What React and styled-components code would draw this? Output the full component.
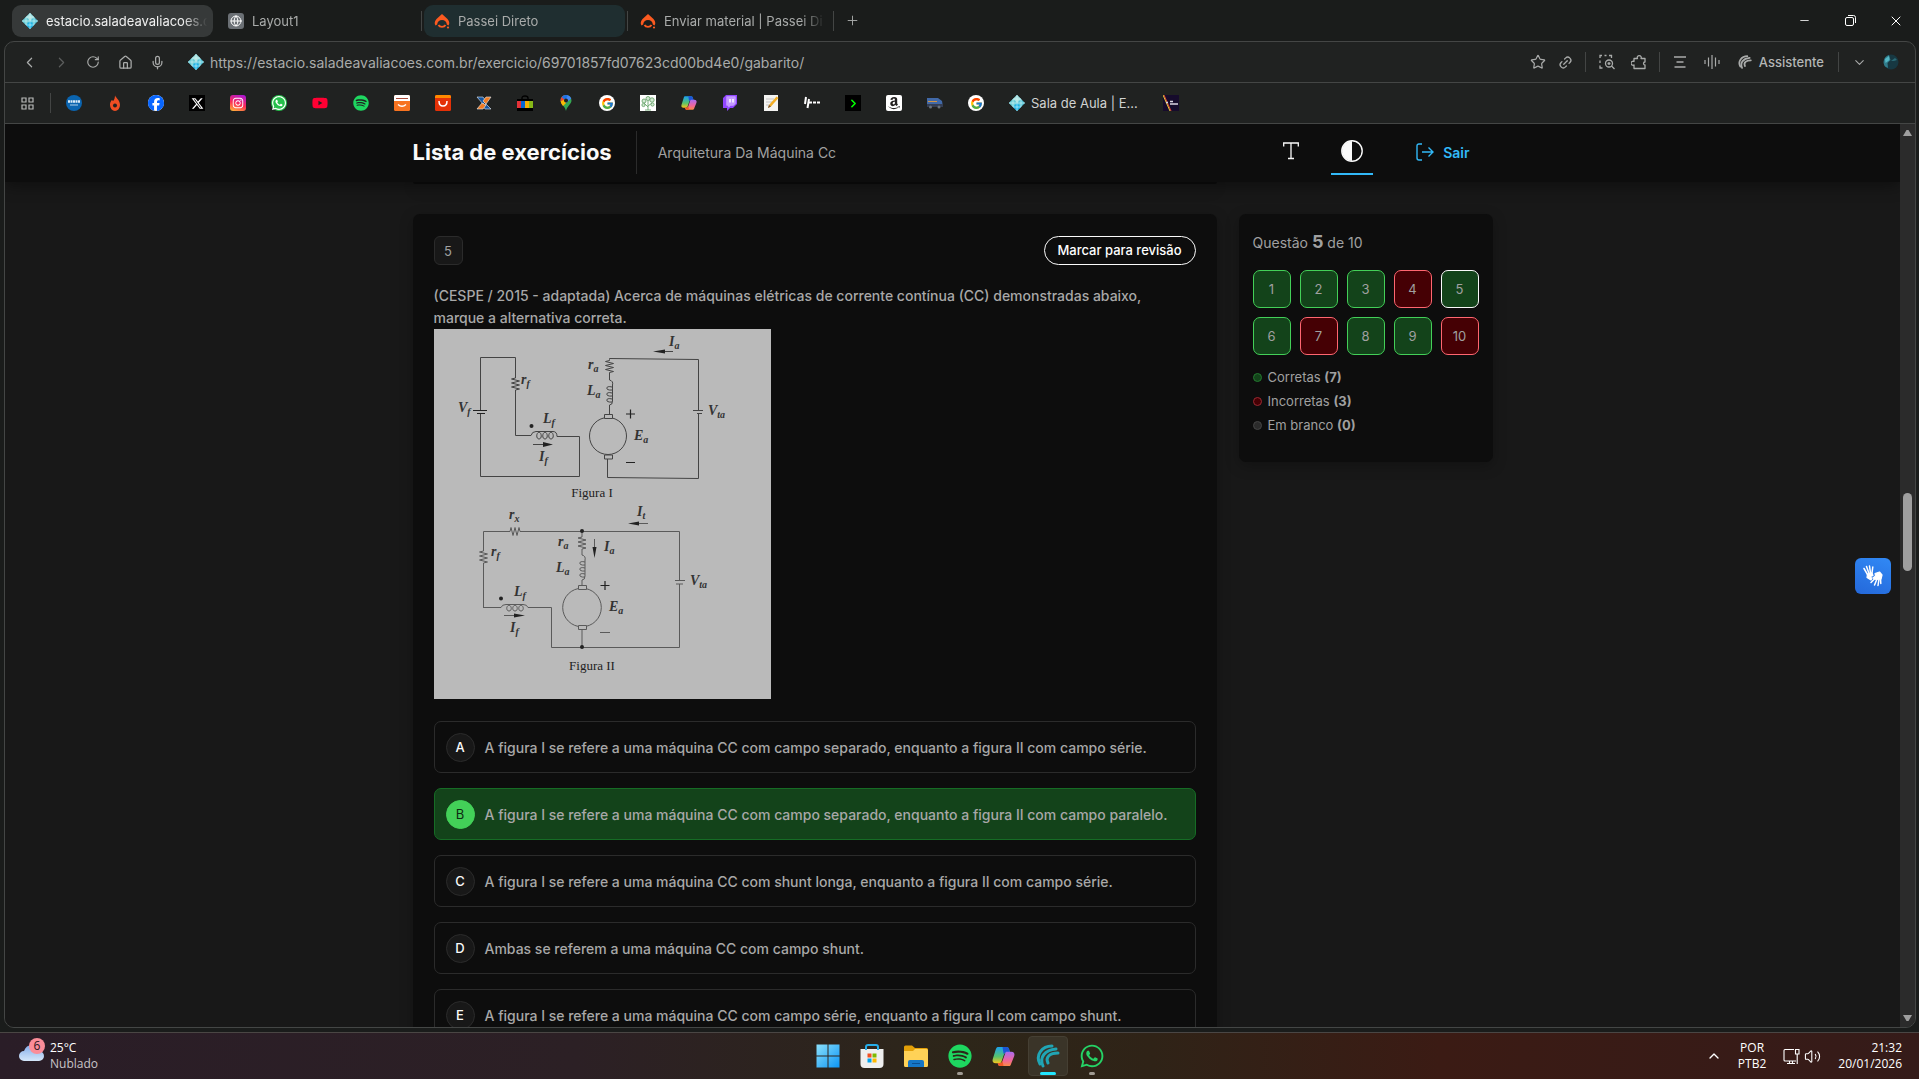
import React, { useState } from "react";
import styled, { createGlobalStyle } from "styled-components";
import {
  ChevronLeft,
  ChevronRight,
  ChevronDown,
  ChevronUp,
  RotateCw,
  House,
  Mic,
  Star,
  Link2,
  Plus,
  Minus,
  X,
  Globe,
  Volume2,
} from "lucide-react";
import {
  FaFacebook,
  FaXTwitter,
  FaInstagram,
  FaWhatsapp,
  FaYoutube,
  FaSpotify,
  FaAmazon,
} from "react-icons/fa6";
import { FcGoogle } from "react-icons/fc";

const GlobalStyle = createGlobalStyle`
  * {
    box-sizing: border-box;
  }

  body {
    margin: 0;
    background: #1b1d1c;
    font-family: Inter, "Liberation Sans", sans-serif;
    overflow: hidden;
  }

  button,
  input {
    font-family: inherit;
    margin: 0;
  }
`;

/* ---------- browser window ---------- */

const Desktop = styled.div`
  height: 100vh;
  display: flex;
  flex-direction: column;
  background: #1a1c1b;
`;

const TabStrip = styled.div`
  height: 41px;
  flex: none;
  display: flex;
  align-items: center;
  padding: 0 0 0 12px;
`;

const Tab = styled.button`
  width: 201px;
  height: 32px;
  display: flex;
  align-items: center;
  gap: 8px;
  padding: 0 4px 0 10px;
  border: 0;
  border-radius: 9px;
  background: ${({ $bg }) => $bg || "transparent"};
  color: ${({ $active }) => ($active ? "#f0f0f0" : "#a9abaa")};
  font-size: 13px;
  text-align: left;

  svg {
    flex: none;
  }
`;

const TabTitle = styled.span`
  flex: 1;
  overflow: hidden;
  white-space: nowrap;
  mask-image: linear-gradient(90deg, #000 84%, transparent 99%);
`;

const TabGap = styled.span`
  width: 5px;
  height: 20px;
  display: flex;
  justify-content: center;

  &::before {
    content: "";
    width: 1px;
    background: ${({ $line }) => ($line ? "#434544" : "transparent")};
  }
`;

const IconButton = styled.button`
  width: ${({ $width }) => $width || 32}px;
  height: 30px;
  display: flex;
  align-items: center;
  justify-content: center;
  flex: none;
  padding: 0;
  border: 0;
  background: none;
  color: ${({ $color }) => $color || "#a9abaa"};
`;

const WindowControls = styled.div`
  margin-left: auto;
  display: flex;
`;

const BrowserFrame = styled.div`
  flex: 1;
  min-height: 0;
  display: flex;
  flex-direction: column;
  margin: 0 3px 4px 4px;
  border: 1px solid #444645;
  border-radius: 10px;
  overflow: hidden;
  background: #202221;
`;

const Toolbar = styled.div`
  height: 41px;
  flex: none;
  display: flex;
  align-items: center;
  padding: 0 8px;
  border-bottom: 1px solid #444645;
`;

const AddressIcon = styled.span`
  display: flex;
  margin: 0 6px 0 15px;
`;

const Address = styled.input`
  flex: 1;
  min-width: 0;
  padding: 0;
  border: 0;
  outline: 0;
  background: none;
  color: #a9abaa;
  font-size: 14px;
`;

const Separator = styled.span`
  width: 1px;
  height: 20px;
  flex: none;
  margin: 0 ${({ $space }) => $space || 4}px;
  background: #434544;
`;

const Assistant = styled.button`
  display: flex;
  align-items: center;
  gap: 7px;
  padding: 0 10px;
  border: 0;
  background: none;
  color: #b4b6b5;
  font-size: 13px;
  font-weight: 500;
`;

const Bookmarks = styled.nav`
  height: 41px;
  flex: none;
  display: flex;
  align-items: center;
  gap: 25px;
  padding: 0 14px;
  border-bottom: 1px solid #444645;
`;

const BookmarksMenu = styled.span`
  display: flex;
  align-items: center;
  gap: 14px;
  margin-right: -11px;
`;

const Bookmark = styled.a`
  display: flex;
  align-items: center;
  gap: 6px;
  color: #d0d2d1;
  font-size: 13px;
  text-decoration: none;
`;

const Tile = styled.span`
  width: 16px;
  height: 16px;
  display: flex;
  align-items: center;
  justify-content: center;
  border-radius: ${({ $radius }) => $radius || 0}px;
  background: ${({ $bg }) => $bg};
  color: ${({ $color }) => $color || "#fff"};
`;

/* ---------- page ---------- */

const Viewport = styled.div`
  flex: 1;
  min-height: 0;
  display: flex;
`;

const Page = styled.div`
  flex: 1;
  min-width: 0;
  display: flex;
  flex-direction: column;
  position: relative;
  overflow: hidden;
  background: #181818;
`;

const PageHeader = styled.header`
  flex: none;
  position: relative;
  z-index: 1;
  background: #0d0d0d;
  box-shadow: 0 4px 14px rgba(0, 0, 0, 0.4);
`;

const HeaderInner = styled.div`
  max-width: 1080px;
  height: 58px;
  margin: 0 auto;
  padding-bottom: 2px;
  display: flex;
  align-items: center;
`;

const PageTitle = styled.h1`
  margin: 0;
  color: #fafafa;
  font-size: 22px;
  font-weight: 700;
`;

const HeaderDivider = styled.span`
  width: 1px;
  height: 43px;
  margin: 0 21px 0 24px;
  background: #2b2b2b;
`;

const Subject = styled.span`
  color: #a0a0a0;
  font-size: 14px;
`;

const HeaderTools = styled.div`
  align-self: stretch;
  display: flex;
  align-items: center;
  gap: 19px;
  margin-left: auto;
  padding: 0 23px 0 0;
`;

const ToolButton = styled.button`
  width: 42px;
  height: 46px;
  display: flex;
  align-items: center;
  justify-content: center;
  padding: 0;
  border: 0;
  border-bottom: 2px solid ${({ $active }) => ($active ? "#32b9f8" : "transparent")};
  background: none;
  color: #fafafa;
`;

const ExitLink = styled.a`
  display: flex;
  align-items: center;
  gap: 9px;
  margin-left: 24px;
  color: #32b9f8;
  font-size: 14px;
  font-weight: 600;
  text-decoration: none;
`;

const Content = styled.main`
  flex: 1;
  min-height: 0;
  width: 100%;
  max-width: 1080px;
  margin: 0 auto;
  display: grid;
  grid-template-columns: minmax(0, 1fr) 254px;
  align-items: start;
  gap: 22px;
`;

const PreviousCard = styled.div`
  height: 2px;
  margin-bottom: 30px;
  border-radius: 0 0 7px 7px;
  background: #0d0d0d;
  box-shadow: 0 4px 14px rgba(0, 0, 0, 0.25);
`;

const Card = styled.section`
  padding: 22px 21px;
  border-radius: 7px;
  background: #0d0d0d;
  box-shadow: 0 4px 14px rgba(0, 0, 0, 0.25);
`;

const CardTop = styled.div`
  display: flex;
  align-items: center;
  justify-content: space-between;
`;

const QuestionNumber = styled.span`
  width: 29px;
  height: 29px;
  display: flex;
  align-items: center;
  justify-content: center;
  border: 1px solid #2b2b2b;
  border-radius: 6px;
  background: #181818;
  color: #a0a0a0;
  font-size: 13px;
`;

const ReviewButton = styled.button`
  width: 152px;
  height: 29px;
  padding: 0 0 2px;
  border: 1px solid #fafafa;
  border-radius: 15px;
  background: none;
  color: #fff;
  font-size: 13px;
  font-weight: 500;
`;

const Statement = styled.p`
  margin: 20px 0 0;
  color: #a8a8a8;
  font-size: 14px;
  font-weight: 500;
  line-height: 22px;
`;

const Figure = styled.svg`
  display: block;
  width: 337px;
  height: 370px;
  background: #bababa;
`;

const Options = styled.div`
  display: flex;
  flex-direction: column;
  gap: 15px;
  margin-top: 22px;
`;

const Option = styled.button`
  width: 100%;
  height: 52px;
  flex: none;
  display: flex;
  align-items: center;
  gap: 10px;
  padding: 0 11px;
  border: 1px solid ${({ $correct }) => ($correct ? "#166c25" : "#2b2b2b")};
  border-radius: 7px;
  background: ${({ $correct }) => ($correct ? "#13431a" : "transparent")};
  color: #a8a8a8;
  font-size: 14px;
  font-weight: 500;
  text-align: left;
`;

const OptionLetter = styled.span`
  width: 29px;
  height: 29px;
  flex: none;
  display: flex;
  align-items: center;
  justify-content: center;
  border: 1px solid ${({ $correct }) => ($correct ? "#43d058" : "#2b2b2b")};
  border-radius: 50%;
  background: ${({ $correct }) => ($correct ? "#43d058" : "#181818")};
  color: ${({ $correct }) => ($correct ? "#0d2b12" : "#fafafa")};
  font-size: 13px;
  font-weight: ${({ $correct }) => ($correct ? 400 : 500)};
`;

const Sidebar = styled.aside`
  margin-top: 32px;
  padding: 15px 14px 25px;
  border-radius: 7px;
  background: #0d0d0d;
  box-shadow: 0 4px 14px rgba(0, 0, 0, 0.25);
  color: #a0a0a0;
`;

const Progress = styled.p`
  margin: 0 0 15px;
  font-size: 14px;
  line-height: 25px;

  strong {
    font-size: 18px;
    font-weight: 700;
  }
`;

const QuestionGrid = styled.div`
  display: grid;
  grid-template-columns: repeat(5, 1fr);
  gap: 9px;
`;

const QuestionButton = styled.button`
  height: 38px;
  padding: 0;
  border: 1px solid
    ${({ $current, $correct }) => ($current ? "#fafafa" : $correct ? "#43d058" : "#ff6670")};
  border-radius: 7px;
  background: ${({ $correct }) => ($correct ? "#13431a" : "#450004")};
  color: #a0a0a0;
  font-size: 13px;
`;

const Legend = styled.ul`
  margin: 10px 0 0;
  padding: 0;
  list-style: none;
  font-size: 13px;
  line-height: 24px;
`;

const LegendItem = styled.li`
  display: flex;
  align-items: center;
  gap: 6px;

  &::before {
    content: "";
    width: 7px;
    height: 7px;
    border: 1px solid ${({ $border }) => $border};
    border-radius: 50%;
    background: ${({ $bg }) => $bg};
  }
`;

const LibrasButton = styled.button`
  position: absolute;
  right: 9px;
  top: 434px;
  width: 36px;
  height: 36px;
  display: flex;
  align-items: center;
  justify-content: center;
  padding: 0;
  border: 0;
  border-radius: 6px;
  background: linear-gradient(200deg, #3189f5, #2468da);
  color: #fff;
`;

const Scrollbar = styled.div`
  width: 15px;
  flex: none;
  display: flex;
  flex-direction: column;
  align-items: center;
  padding: 5px 0;
  background: #2b2b2b;
`;

const ScrollSpace = styled.span`
  flex: ${({ $grow }) => $grow};
`;

const ScrollThumb = styled.span`
  width: 9px;
  height: 78px;
  border-radius: 5px;
  background: #9f9f9f;
`;

/* ---------- taskbar ---------- */

const Taskbar = styled.footer`
  height: 47px;
  flex: none;
  display: grid;
  grid-template-columns: 1fr auto 1fr;
  align-items: center;
  border-top: 1px solid #4a4644;
  background: linear-gradient(90deg, #2a1d27 0%, #2c2025 30%, #2d2619 50%, #2f2317 60%, #3b1b14 75%, #351b19 100%);
  color: #fff;
  font-family: "Open Sans", "Noto Sans", sans-serif;
  font-size: 12px;
  line-height: 16px;
`;

const Weather = styled.button`
  display: flex;
  align-items: center;
  gap: 5px;
  padding: 0 0 0 18px;
  border: 0;
  background: none;
  color: #fff;
  font: inherit;
  text-align: left;

  span {
    color: #c9c4c7;
  }
`;

const Apps = styled.div`
  display: flex;
  gap: 4px;
`;

const AppButton = styled.button`
  position: relative;
  width: 40px;
  height: 40px;
  display: flex;
  align-items: center;
  justify-content: center;
  padding: 0;
  border: 1px solid ${({ $active }) => ($active ? "#453f33" : "transparent")};
  border-radius: 4px;
  background: ${({ $active }) => ($active ? "#3a3428" : "none")};

  &::after {
    content: "";
    position: absolute;
    bottom: 0;
    width: ${({ $active }) => ($active ? 16 : 6)}px;
    height: 3px;
    border-radius: 2px;
    background: ${({ $active, $running }) =>
      $active ? "#22e6ff" : $running ? "#a19b93" : "transparent"};
  }
`;

const Tray = styled.div`
  display: flex;
  align-items: center;
  justify-content: flex-end;
  padding-right: 17px;
  text-align: center;

  svg {
    margin-right: 4px;
  }
`;

const Language = styled.span`
  margin: 0 17px 0 12px;
`;

const Clock = styled.time`
  margin-left: 13px;
  text-align: right;
`;

/* ---------- icons ---------- */

const DiamondIcon = () => (
  <svg width="16" height="16" viewBox="0 0 16 16">
    <path d="M8 0l8 8-8 8-8-8z" fill="#55c3d8" />
    <path d="M8 0l4 4-4 4-4-4z" fill="#a5e0df" />
    <path d="M0 8l4-4 4 4-4 4z" fill="#6accd5" />
    <path d="M8 8l4 4-4 4-4-4z" fill="#1fb4e8" />
    <path d="M4 4h8v8H4zM8 0v16M0 8h16" fill="none" stroke="#d7f6f6" strokeWidth=".6" />
  </svg>
);

const PasseiIcon = () => (
  <svg width="16" height="16" viewBox="0 0 16 16">
    <path d="M8 1L13.500 6Q16.500 9.500 14.500 12.500L12.800 11.500A4.800 4.500 0 0 0 3.200 11.500L1.500 12.500Q-.5 9.500 2.500 6z" fill="#fb5a20" />
    <path d="M4.500 12a3.800 3 0 0 0 7 0" fill="none" stroke="#fb5a20" strokeWidth="1.800" />
    <circle cx="14" cy="14.500" r="1.100" fill="#fb5a20" />
  </svg>
);

const CopilotIcon = ({ size }) => (
  <svg width={size} height={size} viewBox="0 0 24 24">
    <defs>
      <linearGradient id="copilotLeft" x1="0" y1="0" x2="0" y2="1">
        <stop offset="0" stopColor="#1ba1ef" />
        <stop offset=".6" stopColor="#58c46c" />
        <stop offset="1" stopColor="#f5c51d" />
      </linearGradient>
      <linearGradient id="copilotRight" x1="0" y1="0" x2="0" y2="1">
        <stop offset="0" stopColor="#a86bf2" />
        <stop offset=".6" stopColor="#f0669b" />
        <stop offset="1" stopColor="#fb8a45" />
      </linearGradient>
    </defs>
    <path d="M6 2h9c2 0 2.500 1 3 3l.8 3h-4c-1.500 0-2 1-2.500 2.500L10 17c-.5 1.500-1 2-2.500 2H4c-3 0-4-2-3.200-4.500L4 4.500C4.500 3 5 2 6 2z" fill="url(#copilotLeft)" />
    <path d="M11 2h4c2 0 2.500 1 3 3l.8 3h-4c-1.500 0-2 0-2.600 2z" fill="#1c56d5" />
    <path d="M18 22H9c-2 0-2.500-1-3-3h2.500c1.500 0 2-1 2.500-2.500L14 8c.5-1 1-1 2-1h4c3 0 4 2 3.200 4.500L20 19.500c-.5 1.500-1 2.500-2 2.500z" fill="url(#copilotRight)" />
    <path d="M6 19h2.500c1.500 0 2-1 2.500-2.500l1 5.500H9c-2 0-2.500-1-3-3z" fill="#f05a28" />
  </svg>
);

const SwirlIcon = ({ size, color }) => (
  <svg width={size} height={size} viewBox="0 0 24 24" fill="none" stroke={color} strokeLinecap="round">
    <path d="M4 20C-1 11 6 2 16 2" strokeWidth="3" />
    <path d="M7 22C3 13 9 6 20 5" strokeWidth="3" />
    <path d="M12 19C9 13 14 9 22 9" strokeWidth="3" />
  </svg>
);

const FireIcon = () => (
  <svg width="16" height="16" viewBox="0 0 16 16">
    <path d="M8 0c0 2.500 5 4.500 5 10a5 6 0 0 1-10 0c0-2 .6-3.500 1.800-5L6.200 6C7.500 4.500 8 2.500 8 0z" fill="#f04e23" />
    <circle cx="8" cy="10.500" r="2" fill="#202221" />
  </svg>
);

const BagIcon = ({ top, color, brand }) => (
  <svg width="16" height="16" viewBox="0 0 16 16">
    <rect width="16" height="16" rx="1.500" fill={color} />
    <path d={brand ? "M0 1.500Q0 0 1.500 0h13Q16 0 16 1.500v4.500H0z" : "M0 1.500Q0 0 1.500 0h13Q16 0 16 1.500V3H0z"} fill={top} />
    {brand && <path d="M2 3.500h12" stroke="#a84a38" strokeWidth="1.200" />}
    <path d={brand ? "M4 9.500q4 3.500 8 0" : "M4 6q0 5 4 5t4-5"} fill="none" stroke="#fff" strokeWidth="1.500" />
  </svg>
);

const KnotIcon = () => (
  <svg width="16" height="16" viewBox="0 0 16 16" stroke="#e8eef5" strokeWidth=".6">
    <path d="M1 2h6l3 4-3 3zM10 9l5 5H9L7 11z" fill="#15559f" />
    <path d="M15 2h-5L7 6l3 3zM6 8l-5 6h6l3-4z" fill="#f07b22" />
  </svg>
);

const StripedBagIcon = () => (
  <svg width="16" height="16" viewBox="0 0 16 16">
    <path d="M5 5V3q0-2 3-2t3 2v2" fill="none" stroke="#000" strokeWidth="1.400" />
    <path d="M0 4h16v12H0z" fill="#000" />
    <path d="M0 6h4v7H0z" fill="#e53238" />
    <path d="M4 6h4v7H4z" fill="#0864d2" />
    <path d="M8 6h4v7H8z" fill="#f5af02" />
    <path d="M12 6h4v7h-4z" fill="#86b817" />
  </svg>
);

const PinIcon = () => (
  <svg width="16" height="16" viewBox="0 0 16 16">
    <path d="M8 0a5.500 5.500 0 0 1 5.500 5.500C13.500 9 9 11 8 16 7 11 2.500 9 2.500 5.500A5.500 5.500 0 0 1 8 0z" fill="#34a853" />
    <path d="M8 0a5.500 5.500 0 0 1 5.200 3.700L8 8z" fill="#4285f4" />
    <path d="M8 0v5L4 9C2 6.500 2.200 4 3.700 2.100A5.500 5.500 0 0 1 8 0z" fill="#ea4335" />
    <path d="M2.700 6.500L7 4l1 4-3 3C4 9.500 3 8.500 2.700 6.500z" fill="#fbbc04" />
    <path d="M8 0a5.500 5.500 0 0 0-4.300 2L7 5l3-4.500z" fill="#1a73e8" />
    <circle cx="8" cy="5.500" r="2" fill="#202221" />
  </svg>
);

const TreeIcon = () => (
  <svg width="16" height="16" viewBox="0 0 16 16">
    <rect width="16" height="16" fill="#fff" />
    <g fill="#d3e8d3" stroke="#6aa66d" strokeWidth=".9">
      <circle cx="8" cy="3.500" r="2" />
      <circle cx="4" cy="6" r="2" />
      <circle cx="12" cy="5" r="2.200" />
      <circle cx="3.500" cy="10" r="1.600" />
      <circle cx="12.500" cy="9.500" r="1.600" />
      <path d="M8 15V6M8 12L4 8M8 11l4-3M5 15h6" />
    </g>
  </svg>
);

const TwitchIcon = () => (
  <svg width="16" height="16" viewBox="0 0 16 16">
    <path d="M4 0h11v9l-4 4H8l-3 3v-3H1V3z" fill="#9146ff" />
    <path d="M4.500 1.500h9v7l-2 2H8.500l-2 2v-2h-2z" fill="#fff" />
    <path d="M4.500 1.500h9v7l-2 2H8.500l-2 2v-2h-2z" fill="#9146ff" opacity=".55" />
    <path d="M8 4v3.500M11 4v3.500" stroke="#fff" strokeWidth="1.500" />
  </svg>
);

const NoteIcon = () => (
  <svg width="16" height="16" viewBox="0 0 16 16">
    <path d="M1 0h14v16H1z" fill="#f4f4f2" />
    <path d="M3 4h8M3 7h6M3 10h4" stroke="#c4c4c4" />
    <path d="M5 13l1-3L13.500 1.500l2 1.500L8 11.500z" fill="#f3ae25" />
    <path d="M5 13l1-3 2 1.500z" fill="#70503a" />
  </svg>
);

const DashIcon = () => (
  <svg width="16" height="16" viewBox="0 0 16 16" fill="none" stroke="#fff">
    <path d="M2 2L1 9M5 4L3.500 13" strokeWidth="2" />
    <path d="M5 7.500h11" strokeWidth="2" strokeDasharray="3 1" />
  </svg>
);

const TruckIcon = () => (
  <svg width="16" height="16" viewBox="0 0 16 16">
    <path d="M0 3h11l4 3 1 6H0z" fill="#4169a8" />
    <path d="M1 6.500h9" stroke="#d39543" />
    <path d="M0 9h16v3H0z" fill="#343e54" />
    <circle cx="3.500" cy="12" r="1.500" fill="#69727c" />
    <circle cx="12" cy="12" r="1.500" fill="#69727c" />
  </svg>
);

const PrismIcon = () => (
  <svg width="16" height="16" viewBox="0 0 16 16">
    <rect width="16" height="16" fill="#160b2c" />
    <path d="M1 0l7 16" stroke="#e33e36" />
    <path d="M0 0l7 16" stroke="#e7cb3c" />
    <path d="M3 7.500h2M7 6.500h3M7 9h8" stroke="#ddd6e4" strokeWidth="1.300" />
  </svg>
);

const GridIcon = () => (
  <svg width="13" height="13" viewBox="0 0 13 13" fill="none" stroke="#b9bbba" strokeWidth="1.200">
    <path d="M1 1h4v4H1zM8 1h4v4H8zM1 8h4v4H1zM8 8h4v4H8z" />
  </svg>
);

const SearchAreaIcon = () => (
  <svg width="16" height="16" viewBox="0 0 16 16" fill="none" stroke="#a9abaa" strokeWidth="1.300">
    <path d="M1 4V1.500h2M5.500 1.500h2M10 1.500h2.500V4M1 6.500V9M1 11.500V14h2.500" />
    <circle cx="10" cy="9.500" r="3.500" />
    <path d="M12.500 12l3 3M8.500 9.500h3M10 8v3" />
  </svg>
);

const PuzzleIcon = () => (
  <svg width="16" height="16" viewBox="0 0 16 16" fill="none" stroke="#a9abaa" strokeWidth="1.300" strokeLinejoin="round">
    <path d="M3 4.500h3.500a2 2 0 1 1 3.500 0h4V8a1.500 1.500 0 1 0 0 3v3.500H3V11a2 2 0 1 1 0-3.500z" />
  </svg>
);

const LinesIcon = () => (
  <svg width="14" height="14" viewBox="0 0 14 14" stroke="#a9abaa" strokeWidth="1.400">
    <path d="M1 2h12M3.500 7h7M1.500 12h11" />
  </svg>
);

const WaveIcon = () => (
  <svg width="16" height="16" viewBox="0 0 16 16" stroke="#a9abaa" strokeWidth="1.200">
    <path d="M1 6v4M4.500 3.500v9M8 1v14M11.500 3.500v9M15 6v4" />
  </svg>
);

const RestoreIcon = () => (
  <svg width="11" height="11" viewBox="0 0 11 11" fill="none" stroke="#fff">
    <rect x=".5" y="2.500" width="8" height="8" rx="1.500" />
    <path d="M3 .5h5.500a2 2 0 0 1 2 2V8" />
  </svg>
);

const AvatarIcon = () => (
  <svg width="16" height="16" viewBox="0 0 16 16">
    <circle cx="8" cy="8" r="7.500" fill="#173842" />
    <path d="M6 1A7.500 7.500 0 0 0 2 12.500L5 14 4.500 9l3-3z" fill="#317c8b" />
    <path d="M2 5l4-3 .5 4-4 3z" fill="#55b8c5" />
    <path d="M8 7l4-3 2 2-3 1z" fill="#2b6a76" />
  </svg>
);

const TextSizeIcon = () => (
  <svg width="16" height="18" viewBox="0 0 16 18" fill="none" stroke="#fafafa" strokeWidth="1.300">
    <path d="M.7 4.500V1h14.600v3.500M8 1v15.500M5 16.500h6" />
  </svg>
);

const ContrastIcon = () => (
  <svg width="22" height="22" viewBox="0 0 22 22">
    <circle cx="11" cy="11" r="10.200" fill="none" stroke="#fafafa" strokeWidth="1.400" />
    <path d="M11 1a10 10 0 0 0 0 20z" fill="#fafafa" />
  </svg>
);

const ExitIcon = () => (
  <svg width="18" height="18" viewBox="0 0 18 18" fill="none" stroke="#32b9f8" strokeWidth="1.400">
    <path d="M6 1H3Q1 1 1 3v12q0 2 2 2h3M6 9h11M12.500 4.500L17 9l-4.500 4.500" />
  </svg>
);

const LibrasIcon = () => (
  <svg width="20" height="22" viewBox="0 0 20 22" fill="none" stroke="#fff" strokeLinecap="round" strokeLinejoin="round">
    <path d="M4.500 9.500L1 3.500M6 8.500L3.500 1.500M7.500 8L6.500 1M9 8L9.800 2" strokeWidth="1.500" />
    <path d="M4.500 9L9 8l1 2.500-3.500 1.500L9 13l-1 2-4-2.500z" fill="#fff" strokeWidth="1.200" />
    <path d="M12 8.500L16.500 7l2.500 3-1 4-5 .5-3-1.500 2.500-2z" fill="#fff" strokeWidth="1.200" />
    <path d="M12.500 13L8 17.500M14 14L11.500 20M16 14l-1 6.500M17.500 13.500l.3 5" strokeWidth="1.500" />
  </svg>
);

const ScrollArrow = ({ down }) => (
  <svg width="9" height="8" viewBox="0 0 9 8">
    <path d={down ? "M0 1h9L5.500 7h-2z" : "M0 7h9L5.500 1h-2z"} fill="#9f9f9f" />
  </svg>
);

const CloudIcon = () => (
  <svg width="27" height="36" viewBox="0 0 27 36">
    <defs>
      <linearGradient id="cloud" x1="0" y1="0" x2="0" y2="1">
        <stop offset="0" stopColor="#83ace9" />
        <stop offset="1" stopColor="#d5e7fa" />
      </linearGradient>
    </defs>
    <path d="M6 23a5 5 0 0 1 0-10Q8 7 14 7t7 6a5 5 0 0 1 0 10z" fill="url(#cloud)" />
    <circle cx="19" cy="8" r="8" fill="#fb8d99" />
    <text x="19" y="12" textAnchor="middle" fontSize="12" fill="#2a1520">6</text>
  </svg>
);

const WindowsIcon = () => (
  <svg width="24" height="24" viewBox="0 0 24 24">
    <defs>
      <linearGradient id="windows" x1="0" y1="0" x2="1" y2="1">
        <stop offset="0" stopColor="#8be0fb" />
        <stop offset="1" stopColor="#0c95f5" />
      </linearGradient>
    </defs>
    <path d="M.5.500h11v11H.5zM12.500.500h11v11h-11zM.5 12.500h11v11H.5zM12.500 12.500h11v11h-11z" fill="url(#windows)" />
  </svg>
);

const StoreIcon = () => (
  <svg width="24" height="24" viewBox="0 0 24 24">
    <path d="M6 8V3q0-2 2-2h8q2 0 2 2v5" fill="none" stroke="#27ade8" strokeWidth="2" />
    <path d="M.5 5h23v15q0 4-4 4h-15q-4 0-4-4z" fill="#efefef" />
    <path d="M6 6V3M18 6V3" stroke="#27ade8" strokeWidth="2" />
    <path d="M7.500 9.500h4v4h-4z" fill="#f25022" />
    <path d="M12.500 9.500h4v4h-4z" fill="#7fba00" />
    <path d="M7.500 14.500h4v4h-4z" fill="#00a4ef" />
    <path d="M12.500 14.500h4v4h-4z" fill="#ffb900" />
  </svg>
);

const FolderIcon = () => (
  <svg width="24" height="24" viewBox="0 0 24 24">
    <path d="M0 3q0-1.500 1.500-1.500H8L11 4h11.500Q24 4 24 5.500V12H0z" fill="#e3a008" />
    <path d="M0 7h9l2-2h11.500Q24 5 24 6.500v15q0 1.500-1.500 1.500h-21Q0 23 0 21.500z" fill="#ffd257" />
    <path d="M4 23v-5q0-2 2-2h12q2 0 2 2v5z" fill="#1576c6" />
    <path d="M8 19.500h8" stroke="#0b4f91" />
  </svg>
);

const NetworkIcon = () => (
  <svg width="17" height="17" viewBox="0 0 17 17" fill="none" stroke="#fff" strokeWidth="1.100">
    <path d="M11 1.500H2q-1 0-1 1V12q0 1 1 1h11M4 15.500h8M6.500 13v2.500M9.500 13v2.500" />
    <path d="M12.500 1.500h3.500V6h-3.500zM14.200 6v10" />
  </svg>
);

/* ---------- circuit figure ---------- */

const Symbol = ({ x, y, name, sub }) => (
  <text x={x} y={y} fontSize="14" fontStyle="italic" fontWeight="700" fill="#333">
    {name}
    <tspan dy="3" fontSize="10">
      {sub}
    </tspan>
  </text>
);

const ZIGZAG_V = "l0 1l-4 1l8 2l-8 2l8 2l-8 2l8 2l-4 1";
const ZIGZAG_H = "l1 0l1 -4l2 8l2 -8l2 8l2 -8l1 4l1 0";

const CircuitFigure = () => (
  <Figure viewBox="0 0 337 370" role="img" aria-label="Figura I e Figura II">
    <g fill="none" stroke="#444" strokeWidth="1">
      <path d={`M46.500 81V28.500H81.500V48${ZIGZAG_V}V106.500H97M123 107.500H145.500V147.500H46.500V85`} />
      <path d="M39 81.500H53M43 84.500H51" stroke="#222" />
      <path d="M97 106.500q1-4 5-4h17q4 0 4 5" />
      <path d="M105 103c-3 1-3 7 0 7s3-6 0-7M111 103c-3 1-3 7 0 7s3-6 0-7M117 103c-3 1-3 7 0 7s3-6 0-7" />
      <path d={`M264.500 81V30.500L175.500 29.500v1${ZIGZAG_V}V51q4 1 3 5v16q0 4-3 4v9.500M264.500 85V149.500L173.500 148.500V130`} />
      <path d="M259 81.500h10M263 84.500h5" />
      <path d="M178 58c-7-2-7 4 0 3M178 64c-7-2-7 4 0 3M178 70c-7-2-7 4 0 3" />
      <circle cx="174" cy="107" r="18.500" />
      <path d="M170.500 85.500h8v4h-8zM170.500 126h8v4h-8z" fill="#bababa" />
      <path d="M192 85h9M196.500 80.500v9M192 133.500h9" stroke="#222" strokeWidth="1.200" />
      <path d="M99 115.500h16M225 22.500h14" />
    </g>
    <g fill="none" stroke="#5a5a5a" strokeWidth="1">
      <path d={`M49.500 279V234M49.500 222V202.500H75${ZIGZAG_H}H245.500V251M245.500 255V318.500H117.500V278.500H94M67 278.500H49.500`} />
      <path d={`M49.500 221${ZIGZAG_V}`} />
      <path d="M241 251.500h10M242 255h7" />
      <path d="M67 278.500q1-3 5-3h17q4 0 5 3" />
      <path d="M75 276c-3 1-3 6 0 6s3-5 0-6M81 276c-3 1-3 6 0 6s3-5 0-6M87 276c-3 1-3 6 0 6s3-5 0-6" />
      <path d={`M148 202V207${ZIGZAG_V}V226q4 1 3 5v16q0 4-3 4v5M148 300v18`} />
      <path d="M151 233c-7-2-7 4 0 3M151 239c-7-2-7 4 0 3M151 245c-7-2-7 4 0 3" />
      <circle cx="148" cy="278.500" r="19.300" />
      <path d="M144.500 256.500h8v4h-8zM144.500 296.500h8v4h-8z" fill="#bababa" />
      <path d="M166.500 256.500h9M171 252v9" stroke="#222" strokeWidth="1.200" />
      <path d="M166 303.500h10M160.500 210v10M200 194.500h14M70 286.500h14" />
    </g>
    <g fill="#222">
      <circle cx="97.500" cy="97" r="2" />
      <circle cx="67" cy="269.500" r="2" />
      <circle cx="148" cy="202" r="2" />
      <circle cx="148" cy="318" r="2" />
      <path d="M119 115.500l-10-2.500v5zM219 22.500l12-2v4zM91 286.500l-11-2v4zM194 194.500l11-2v4zM160.500 229l-2-11h4z" />
    </g>
    <g fontFamily='"Liberation Serif", serif'>
      <Symbol x="24" y="83" name="V" sub="f" />
      <Symbol x="87" y="55" name="r" sub="f" />
      <Symbol x="109" y="94" name="L" sub="f" />
      <Symbol x="105" y="132" name="I" sub="f" />
      <Symbol x="235" y="17" name="I" sub="a" />
      <Symbol x="154" y="40" name="r" sub="a" />
      <Symbol x="153" y="66" name="L" sub="a" />
      <Symbol x="200" y="111" name="E" sub="a" />
      <Symbol x="274" y="86" name="V" sub="ta" />
      <Symbol x="75" y="190" name="r" sub="x" />
      <Symbol x="57" y="227" name="r" sub="f" />
      <Symbol x="80" y="267" name="L" sub="f" />
      <Symbol x="76" y="303" name="I" sub="f" />
      <Symbol x="203" y="187" name="I" sub="t" />
      <Symbol x="124" y="217" name="r" sub="a" />
      <Symbol x="170" y="222" name="I" sub="a" />
      <Symbol x="122" y="243" name="L" sub="a" />
      <Symbol x="175" y="282" name="E" sub="a" />
      <Symbol x="256" y="256" name="V" sub="ta" />
      <text x="158" y="168" fontSize="13" textAnchor="middle" fill="#222">Figura I</text>
      <text x="158" y="341" fontSize="13" textAnchor="middle" fill="#222">Figura II</text>
    </g>
  </Figure>
);

/* ---------- data ---------- */

const bookmarks = [
  { name: "Senai", icon: <Tile $bg="#0b65b0" $radius={8}><svg width="12" height="8" viewBox="0 0 12 8" stroke="#dcecf8"><path d="M0 2.500h12" strokeWidth="2.500" strokeDasharray="2 .5" /><path d="M2 6h8" strokeWidth=".8" /></svg></Tile> },
  { name: "Hotmart", icon: <FireIcon /> },
  { name: "Facebook", icon: <Tile $bg="#fff" $color="#0866ff" $radius={8}><FaFacebook size={16} /></Tile> },
  { name: "X", icon: <Tile $bg="#000"><FaXTwitter size={13} /></Tile> },
  { name: "Instagram", icon: <Tile $bg="linear-gradient(20deg, #ffc037, #fb2c55 45%, #a414e6)" $radius={3}><FaInstagram size={12} /></Tile> },
  { name: "WhatsApp", icon: <Tile $bg="#25c04b" $radius={8}><FaWhatsapp size={16} /></Tile> },
  { name: "YouTube", icon: <FaYoutube size={16} color="#f03" /> },
  { name: "Spotify", icon: <FaSpotify size={16} color="#1ed760" /> },
  { name: "Shopping", icon: <BagIcon top="#fff" color="#f77320" brand /> },
  { name: "AliExpress", icon: <BagIcon top="#ff8a00" color="#e43107" /> },
  { name: "Excel", icon: <KnotIcon /> },
  { name: "Loja", icon: <StripedBagIcon /> },
  { name: "Maps", icon: <PinIcon /> },
  { name: "Google", icon: <Tile $bg="#fff" $radius={8}><FcGoogle size={13} /></Tile> },
  { name: "Jardim", icon: <TreeIcon /> },
  { name: "Copilot", icon: <CopilotIcon size={16} /> },
  { name: "Twitch", icon: <TwitchIcon /> },
  { name: "Notas", icon: <NoteIcon /> },
  { name: "Atalho", icon: <DashIcon /> },
  { name: "Terminal", icon: <Tile $bg="#000"><ChevronRight size={13} color="#0f0" strokeWidth={3} /></Tile> },
  { name: "Amazon", icon: <Tile $bg="#fff" $color="#221f1f" $radius={2}><FaAmazon size={14} /></Tile> },
  { name: "Frete", icon: <TruckIcon /> },
  { name: "Pesquisa", icon: <Tile $bg="#fff" $radius={8}><FcGoogle size={13} /></Tile> },
];

const options = [
  { letter: "A", text: "A figura I se refere a uma máquina CC com campo separado, enquanto a figura II com campo série." },
  { letter: "B", text: "A figura I se refere a uma máquina CC com campo separado, enquanto a figura II com campo paralelo.", correct: true },
  { letter: "C", text: "A figura I se refere a uma máquina CC com shunt longa, enquanto a figura II com campo série." },
  { letter: "D", text: "Ambas se referem a uma máquina CC com campo shunt." },
  { letter: "E", text: "A figura I se refere a uma máquina CC com campo série, enquanto a figura II com campo shunt." },
];

const wrongQuestions = [4, 7, 10];

function BrowserTabs() {
  return (
    <TabStrip>
      <Tab $active $bg="#363939">
        <DiamondIcon />
        <TabTitle>estacio.saladeavaliacoes.c</TabTitle>
      </Tab>
      <TabGap />
      <Tab>
        <Tile $bg="#6b7075" $radius={3}><Globe size={12} /></Tile>
        <TabTitle>Layout1</TabTitle>
      </Tab>
      <TabGap $line />
      <Tab $bg="#1f2e30">
        <PasseiIcon />
        <TabTitle>Passei Direto</TabTitle>
      </Tab>
      <TabGap $line />
      <Tab>
        <PasseiIcon />
        <TabTitle>Enviar material | Passei Di</TabTitle>
      </Tab>
      <TabGap $line />
      <IconButton aria-label="Nova aba"><Plus size={15} strokeWidth={1.5} /></IconButton>
      <WindowControls>
        <IconButton $width={46} $color="#fff" aria-label="Minimizar"><Minus size={13} strokeWidth={1.5} /></IconButton>
        <IconButton $width={46} aria-label="Restaurar"><RestoreIcon /></IconButton>
        <IconButton $width={46} $color="#fff" aria-label="Fechar"><X size={16} strokeWidth={1.5} /></IconButton>
      </WindowControls>
    </TabStrip>
  );
}

function AddressBar() {
  const [url, setUrl] = useState(
    "https://estacio.saladeavaliacoes.com.br/exercicio/69701857fd07623cd00bd4e0/gabarito/"
  );

  return (
    <Toolbar>
      <IconButton aria-label="Voltar"><ChevronLeft size={17} strokeWidth={1.7} /></IconButton>
      <IconButton $color="#5b5d5c" aria-label="Avançar"><ChevronRight size={17} strokeWidth={1.7} /></IconButton>
      <IconButton aria-label="Recarregar"><RotateCw size={14} strokeWidth={2} /></IconButton>
      <IconButton aria-label="Início"><House size={15} strokeWidth={2} /></IconButton>
      <IconButton aria-label="Microfone"><Mic size={15} strokeWidth={2} /></IconButton>
      <AddressIcon><DiamondIcon /></AddressIcon>
      <Address aria-label="Endereço" value={url} onChange={(e) => setUrl(e.target.value)} />
      <IconButton $width={28} aria-label="Favoritar"><Star size={16} strokeWidth={1.8} /></IconButton>
      <IconButton $width={28} aria-label="Copiar link"><Link2 size={15} strokeWidth={2} transform="rotate(-45)" /></IconButton>
      <Separator $space={5} />
      <IconButton aria-label="Pesquisar área"><SearchAreaIcon /></IconButton>
      <IconButton aria-label="Extensões"><PuzzleIcon /></IconButton>
      <Separator />
      <IconButton aria-label="Resumo"><LinesIcon /></IconButton>
      <IconButton aria-label="Áudio"><WaveIcon /></IconButton>
      <Assistant>
        <SwirlIcon size={14} color="#a9abaa" />
        Assistente
      </Assistant>
      <Separator />
      <IconButton aria-label="Mais"><ChevronDown size={15} strokeWidth={1.7} /></IconButton>
      <IconButton aria-label="Perfil"><AvatarIcon /></IconButton>
    </Toolbar>
  );
}

function BookmarksBar() {
  return (
    <Bookmarks>
      <BookmarksMenu>
        <IconButton $width={16} aria-label="Favoritos"><GridIcon /></IconButton>
        <Separator $space={1} />
      </BookmarksMenu>
      {bookmarks.map((item) => (
        <Bookmark key={item.name} href="#" aria-label={item.name}>{item.icon}</Bookmark>
      ))}
      <Bookmark href="#">
        <DiamondIcon />
        Sala de Aula | E…
      </Bookmark>
      <Bookmark href="#" aria-label="Prisma"><PrismIcon /></Bookmark>
    </Bookmarks>
  );
}

function QuestionCard() {
  return (
    <Card>
      <CardTop>
        <QuestionNumber>5</QuestionNumber>
        <ReviewButton>Marcar para revisão</ReviewButton>
      </CardTop>
      <Statement>
        (CESPE / 2015 - adaptada) Acerca de máquinas elétricas de corrente contínua (CC) demonstradas
        abaixo, marque a alternativa correta.
      </Statement>
      <CircuitFigure />
      <Options>
        {options.map(({ letter, text, correct }) => (
          <Option key={letter} $correct={correct}>
            <OptionLetter $correct={correct}>{letter}</OptionLetter>
            {text}
          </Option>
        ))}
      </Options>
    </Card>
  );
}

function QuestionNav() {
  return (
    <Sidebar>
      <Progress>
        Questão <strong>5</strong> de 10
      </Progress>
      <QuestionGrid>
        {Array.from({ length: 10 }, (_, i) => i + 1).map((n) => (
          <QuestionButton key={n} $current={n === 5} $correct={!wrongQuestions.includes(n)}>
            {n}
          </QuestionButton>
        ))}
      </QuestionGrid>
      <Legend>
        <LegendItem $bg="#13431a" $border="#23792f"><span>Corretas <b>(7)</b></span></LegendItem>
        <LegendItem $bg="#450004" $border="#9b2932"><span>Incorretas <b>(3)</b></span></LegendItem>
        <LegendItem $bg="#2b2b2b" $border="#444"><span>Em branco <b>(0)</b></span></LegendItem>
      </Legend>
    </Sidebar>
  );
}

function WindowsTaskbar() {
  return (
    <Taskbar>
      <Weather>
        <CloudIcon />
        <div>
          25°C
          <br />
          <span>Nublado</span>
        </div>
      </Weather>
      <Apps>
        <AppButton aria-label="Iniciar"><WindowsIcon /></AppButton>
        <AppButton aria-label="Loja"><StoreIcon /></AppButton>
        <AppButton aria-label="Arquivos"><FolderIcon /></AppButton>
        <AppButton $running aria-label="Spotify"><FaSpotify size={24} color="#1ed760" /></AppButton>
        <AppButton aria-label="Copilot"><CopilotIcon size={23} /></AppButton>
        <AppButton $active aria-label="Navegador"><SwirlIcon size={24} color="#20a5b5" /></AppButton>
        <AppButton $running aria-label="WhatsApp"><FaWhatsapp size={26} color="#25d366" /></AppButton>
      </Apps>
      <Tray>
        <ChevronUp size={16} />
        <Language>
          POR
          <br />
          PTB2
        </Language>
        <NetworkIcon />
        <Volume2 size={17} strokeWidth={1.5} />
        <Clock>
          21:32
          <br />
          20/01/2026
        </Clock>
      </Tray>
    </Taskbar>
  );
}

function App() {
  return (
    <Desktop>
      <GlobalStyle />
      <BrowserTabs />
      <BrowserFrame>
        <AddressBar />
        <BookmarksBar />
        <Viewport>
          <Page>
            <PageHeader>
              <HeaderInner>
                <PageTitle>Lista de exercícios</PageTitle>
                <HeaderDivider />
                <Subject>Arquitetura Da Máquina Cc</Subject>
                <HeaderTools>
                  <ToolButton aria-label="Tamanho do texto"><TextSizeIcon /></ToolButton>
                  <ToolButton $active aria-label="Contraste"><ContrastIcon /></ToolButton>
                  <ExitLink href="#">
                    <ExitIcon />
                    Sair
                  </ExitLink>
                </HeaderTools>
              </HeaderInner>
            </PageHeader>
            <Content>
              <div>
                <PreviousCard />
                <QuestionCard />
              </div>
              <QuestionNav />
            </Content>
            <LibrasButton aria-label="Libras"><LibrasIcon /></LibrasButton>
          </Page>
          <Scrollbar>
            <ScrollArrow />
            <ScrollSpace $grow={356} />
            <ScrollThumb />
            <ScrollSpace $grow={443} />
            <ScrollArrow down />
          </Scrollbar>
        </Viewport>
      </BrowserFrame>
      <WindowsTaskbar />
    </Desktop>
  );
}

export default App;
